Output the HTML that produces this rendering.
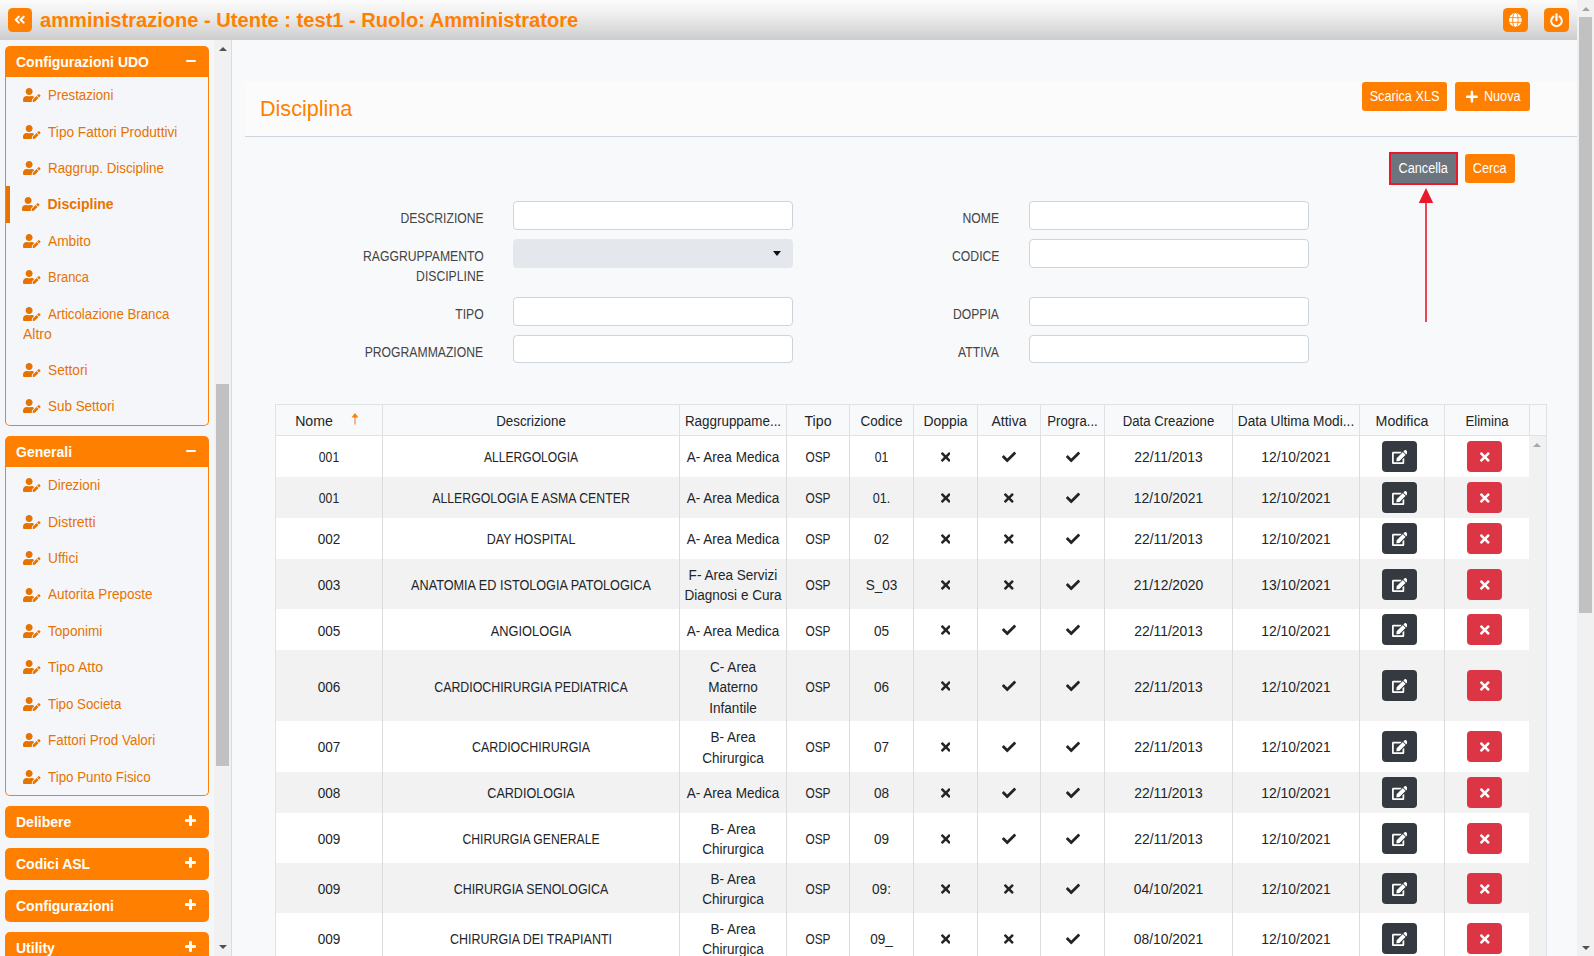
<!DOCTYPE html>
<html lang="it"><head><meta charset="utf-8"><title>Disciplina</title>
<style>
*{box-sizing:border-box;margin:0;padding:0}
html,body{width:1594px;height:956px;overflow:hidden;background:#f8f9fa}
body{position:relative;font-family:"Liberation Sans",sans-serif;font-size:14px;color:#212529}
svg{display:block}
/* header */
#hdr{position:absolute;left:0;top:0;width:1577px;height:40px;background:linear-gradient(#fcfcfc,#f1f1f1 30%,#e3e3e3 58%,#cdcdcd)}
.hb{position:absolute;top:8px;height:24px;background:#ff8000;border-radius:4.500px;display:block}
.hb svg{position:absolute;fill:#fff}
.hb:first-child svg{width:11.400px;height:13.400px;left:6.300px;top:5.400px}
.hb svg.gl{width:12.800px;height:14px;left:6.100px;top:5px}
.hb svg.pw{width:13px;height:15px;left:6.300px;top:4.600px}
#ttl{transform:scaleX(1.004);transform-origin:0 50%;position:absolute;left:40px;top:8px;font-size:20px;font-weight:bold;line-height:24px;color:#ff8000;white-space:nowrap}
/* page scrollbar */
#pscroll{position:absolute;left:1577px;top:0;width:17px;height:956px;background:#f1f1f1}
#pscroll b{position:absolute;left:2px;top:17px;width:13px;height:596px;background:#c1c1c1}
i.up,i.dn{position:absolute;left:50%;margin-left:-4px;width:0;height:0;border-left:4px solid transparent;border-right:4px solid transparent}
i.up{border-bottom:4px solid #a3a3a3;top:7px}
i.dn{border-top:4px solid #505050;bottom:6px}
/* sidebar */
#side{position:absolute;left:0;top:40px;width:214px;height:916px;overflow:hidden;background:#f5f6fa}
#side .ph,#side .pb{position:absolute;left:5px;width:204px;margin-top:-40px}
.ph{height:31px;background:#ff8000;border-radius:5px 5px 0 0;color:#fff;font-weight:bold;font-size:14px;line-height:31px;padding-left:11px;white-space:nowrap}
.ph.cl{height:32px;line-height:32px;border-radius:5px}
.ph em{position:absolute;right:13px;top:13.750px;width:10.500px;height:2.500px;background:#fff;border-radius:1.250px}
.ph.cl em{top:13.250px;right:12.900px;width:11.200px}
.pb{padding-top:1.350px}
.it.two{height:55.900px}
.ph em.pl:after{content:"";position:absolute;left:4.350px;top:-4.350px;width:2.500px;height:11.200px;background:#fff;border-radius:1.250px}
.pb{border:1px solid #ff8000;border-top:0;border-radius:0 0 5px 5px;background:#f5f6fa}
.it{position:relative;padding:7px 0 7px 17px;line-height:20.800px;height:36.420px;color:#e67300;font-size:14px;margin-bottom:0}
.it .ue{display:inline-block;width:17.500px;height:14px;fill:#e67300;vertical-align:-2px;margin-right:8px}
.it .t,.it .t2{display:inline-block;position:relative;top:-.100px;left:-0.500px;transform:scaleX(.95);transform-origin:0 50%}
.it.act{font-weight:bold}
.it.act .t{transform:none;left:-1px;top:-1px}
.it .t2{top:-.600px}
.it.act .ue{margin-left:-1px;margin-right:9px;position:relative;top:-1px}
.it.act:before{content:"";position:absolute;left:0;top:-1.610px;width:4px;height:37px;background:#e67300}
/* sidebar scrollbar */
#sscroll{position:absolute;left:214px;top:40px;width:17px;height:916px;background:#f1f1f1;border-right:0}
#sscroll b{position:absolute;left:2px;top:344px;width:13px;height:382px;background:#c1c1c1}
#sscroll i.dn{bottom:7px}
#sscroll i.up{border-bottom-color:#505050}
/* main */
#main{position:absolute;left:0;top:0;width:1577px;height:956px;pointer-events:none}
#main:before{content:"";position:absolute;left:231px;top:40px;width:1px;height:916px;background:#dcdcdc}
#tbar{position:absolute;left:245px;top:82px;width:1332px;height:55px;background:#fbfbfc;border-bottom:1px solid #cdd6de}
#tbar h1{position:absolute;left:15px;top:13px;transform:scaleX(.98);transform-origin:0 50%;font-size:22px;font-weight:normal;line-height:28px;color:#ff8000}
.btn{position:absolute;display:block;height:29px;border-radius:3px;color:#fff;font-size:14px;line-height:29px;text-align:center;white-space:nowrap}
.btn.or{background:#ff8000}
.btn.gr{background:#6c757d;border:2px solid #e8192c;border-radius:0}
.bx{display:inline-block;transform:scaleX(.905)}
#canc{left:1389px;top:152px;width:69px;height:33px;line-height:29px}
#cerca{left:1465px;top:154px;width:50px}
.plus{display:inline-block;width:11.800px;height:13.500px;vertical-align:-2px;margin-right:4px;margin-left:3px}
.plus svg{fill:#fff;width:11.800px;height:13.500px}
#arrow{position:absolute;left:1415.500px;top:188px}
.fl{position:absolute;font-size:14px;line-height:20px;color:#444;text-align:right;white-space:nowrap}
.fl span{display:inline-block;transform:scaleX(.87);transform-origin:100% 50%}
.inp{position:absolute;width:280px;height:29px;background:#fff;border:1px solid #ced4da;border-radius:4px}
.sel{position:absolute;width:280px;height:29px;background:#e4e7eb;border-radius:4px}
.sel i{position:absolute;right:12px;top:12px;border-left:4px solid transparent;border-right:4px solid transparent;border-top:5px solid #111}
/* grid */
#grid{position:absolute;left:275px;top:404px;width:1272px;height:560px}
table{border-collapse:collapse;table-layout:fixed}
#gh{position:absolute;left:0;top:0;width:1272px;height:32px;background:#f8f9fa}
#gh th{border:1px solid #dee2e6;font-weight:normal;height:31px;position:relative;text-align:center;color:#212529;white-space:nowrap;overflow:hidden}
#gh th div{position:relative;top:1px}
.sort{position:absolute;left:75px;top:8px;width:8px;height:12px}
#gb{position:absolute;left:0;top:32px;width:1254px;height:530px;overflow:hidden}
#gt{width:1254px;margin-left:0}
#gt td{text-align:center;vertical-align:middle;border-left:1px solid #dcdcdc;line-height:20.300px;padding:0;color:#212529}
#gt td:first-child{border-left:1px solid #dee2e6}
#gt td div{position:relative;top:1px}
#gt tr.dn1 td div{top:2px}
#gt tr.od{background:#fff}
#gt tr.ev{background:#f2f2f2}
.u{transform:scaleX(.896)}
.m{transform:scaleX(.967)}
.n{transform:scaleX(.87)}
.d{transform:scaleX(.99)}
.ic{display:inline-block;fill:#212529;position:relative;top:3px}
.ic.tm{width:9.600px;height:14px}
.ic.ck{width:14px;height:14px}
.bt{display:inline-block;width:35px;height:31px;border-radius:4px;vertical-align:middle;position:relative;left:-3px}
.bt.dk{background:#343a40}
.bt.rd{background:#dc3545}
.bt svg{position:absolute;fill:#fff}
.bt .ed{width:15.750px;height:14px;left:10px;top:9px}
.bt .tm{width:9.600px;height:14px;left:13.400px;top:9.300px;position:absolute}
#gscroll{position:absolute;left:1254px;top:32px;width:18px;height:530px;background:#f1f1f1;border-right:1px solid #dee2e6}
#gscroll i.up{top:7px;border-bottom-color:#a8a8a8;margin-left:-4.500px}
#gscroll i.dn{top:508px;bottom:auto;margin-left:-4.500px}

</style></head><body>
<div id="hdr">
  <span class="hb" style="left:8px;width:24px"><svg viewBox="0 0 448 512"><path d="M223.700 239l136-136c9.400-9.400 24.600-9.400 33.900 0l22.600 22.600c9.400 9.400 9.400 24.600 0 33.900L319.900 256l96.400 96.400c9.400 9.400 9.400 24.600 0 33.900L393.700 409c-9.400 9.400-24.600 9.400-33.900 0l-136-136c-9.500-9.400-9.500-24.600-.1-34zm-192 34l136 136c9.400 9.400 24.600 9.400 33.900 0l22.600-22.600c9.400-9.400 9.400-24.600 0-33.900L127.900 256l96.400-96.400c9.400-9.400 9.400-24.600 0-33.900L201.700 103c-9.400-9.400-24.600-9.400-33.900 0l-136 136c-9.500 9.400-9.500 24.600-.1 34z"/></svg></span>
  <div id="ttl">amministrazione - Utente : test1 - Ruolo: Amministratore</div>
  <span class="hb" style="left:1503px;width:25px"><svg viewBox="0 0 26 28" class="gl"><ellipse cx="13" cy="14" rx="13" ry="14" fill="#fff"/><g stroke="#ff8000" stroke-width="1.700" fill="none"><ellipse cx="13" cy="14" rx="5.600" ry="15.500"/><line x1="0" y1="9.300" x2="26" y2="9.300"/><line x1="0" y1="18.700" x2="26" y2="18.700"/></g></svg></span>
  <span class="hb" style="left:1544px;width:25px"><svg viewBox="0 0 26 30" class="pw"><g stroke="#fff" fill="none" stroke-linecap="round"><path d="M6.800 7.200A10.600 10.600 0 1 0 19.200 7.200" stroke-width="4"/><line x1="13" y1="2.400" x2="13" y2="14.500" stroke-width="4.200"/></g></svg></span>
</div>
<div id="pscroll"><i class="up"></i><b></b><i class="dn"></i></div>

<div id="side">
  <div class="ph" style="top:46px"><span style="position:relative;top:.600px">Configurazioni UDO</span><em class="mi"></em></div>
  <div class="pb" style="top:77px;height:349px">
    <div class="it"><svg class="ue" viewBox="0 0 640 512"><path d="M224 256c70.7 0 128-57.300 128-128S294.700 0 224 0 96 57.300 96 128s57.300 128 128 128zm89.600 32h-16.700c-22.200 10.200-46.900 16-72.900 16s-50.600-5.800-72.900-16h-16.700C60.200 288 0 348.200 0 422.400V464c0 26.500 21.500 48 48 48h274.900c-2.400-6.800-3.400-14-2.600-21.300l6.800-60.900 1.200-11.100 7.900-7.900 77.300-77.300c-24.500-27.700-60-45.500-99.900-45.500zm45.300 145.300l-6.800 61c-1.100 10.200 7.500 18.800 17.600 17.600l60.900-6.800 137.900-137.900-71.700-71.700-137.900 137.800zM633 268.900L595.100 231c-9.300-9.300-24.500-9.300-33.800 0l-37.800 37.800-4.100 4.100 71.800 71.700 41.800-41.800c9.300-9.400 9.300-24.500 0-33.900z"/></svg><span class="t" style="transform:scaleX(0.944)">Prestazioni</span></div><div class="it"><svg class="ue" viewBox="0 0 640 512"><path d="M224 256c70.7 0 128-57.300 128-128S294.700 0 224 0 96 57.300 96 128s57.300 128 128 128zm89.600 32h-16.700c-22.200 10.200-46.900 16-72.900 16s-50.600-5.800-72.900-16h-16.700C60.200 288 0 348.200 0 422.400V464c0 26.500 21.500 48 48 48h274.900c-2.400-6.800-3.400-14-2.600-21.300l6.800-60.900 1.200-11.100 7.900-7.900 77.300-77.300c-24.500-27.700-60-45.500-99.900-45.500zm45.300 145.300l-6.800 61c-1.100 10.200 7.500 18.800 17.600 17.600l60.900-6.800 137.900-137.900-71.700-71.700-137.900 137.800zM633 268.900L595.100 231c-9.300-9.300-24.500-9.300-33.800 0l-37.800 37.800-4.100 4.100 71.800 71.700 41.800-41.800c9.300-9.400 9.300-24.500 0-33.900z"/></svg><span class="t" style="transform:scaleX(0.976)">Tipo Fattori Produttivi</span></div><div class="it"><svg class="ue" viewBox="0 0 640 512"><path d="M224 256c70.7 0 128-57.300 128-128S294.700 0 224 0 96 57.300 96 128s57.300 128 128 128zm89.600 32h-16.700c-22.200 10.200-46.900 16-72.900 16s-50.600-5.800-72.900-16h-16.700C60.200 288 0 348.200 0 422.400V464c0 26.500 21.500 48 48 48h274.900c-2.400-6.800-3.400-14-2.600-21.300l6.800-60.900 1.200-11.100 7.900-7.900 77.300-77.300c-24.500-27.700-60-45.500-99.900-45.500zm45.300 145.300l-6.800 61c-1.100 10.200 7.500 18.800 17.600 17.600l60.900-6.800 137.900-137.900-71.700-71.700-137.900 137.800zM633 268.900L595.100 231c-9.300-9.300-24.500-9.300-33.800 0l-37.800 37.800-4.100 4.100 71.800 71.700 41.800-41.800c9.300-9.400 9.300-24.500 0-33.900z"/></svg><span class="t" style="transform:scaleX(0.954)">Raggrup. Discipline</span></div><div class="it act"><svg class="ue" viewBox="0 0 640 512"><path d="M224 256c70.7 0 128-57.300 128-128S294.700 0 224 0 96 57.300 96 128s57.300 128 128 128zm89.600 32h-16.700c-22.200 10.200-46.900 16-72.900 16s-50.600-5.800-72.900-16h-16.700C60.200 288 0 348.200 0 422.400V464c0 26.500 21.500 48 48 48h274.900c-2.400-6.800-3.400-14-2.600-21.300l6.800-60.900 1.200-11.100 7.900-7.900 77.300-77.300c-24.500-27.700-60-45.500-99.900-45.500zm45.300 145.300l-6.800 61c-1.100 10.200 7.500 18.800 17.600 17.600l60.900-6.800 137.900-137.900-71.700-71.700-137.900 137.800zM633 268.900L595.100 231c-9.300-9.300-24.500-9.300-33.800 0l-37.800 37.800-4.100 4.100 71.800 71.700 41.800-41.800c9.300-9.400 9.300-24.500 0-33.900z"/></svg><span class="t">Discipline</span></div><div class="it"><svg class="ue" viewBox="0 0 640 512"><path d="M224 256c70.7 0 128-57.300 128-128S294.700 0 224 0 96 57.300 96 128s57.300 128 128 128zm89.600 32h-16.700c-22.200 10.200-46.900 16-72.900 16s-50.600-5.800-72.900-16h-16.700C60.200 288 0 348.200 0 422.400V464c0 26.500 21.500 48 48 48h274.900c-2.400-6.800-3.400-14-2.600-21.300l6.800-60.900 1.200-11.100 7.900-7.900 77.300-77.300c-24.500-27.700-60-45.500-99.900-45.500zm45.300 145.300l-6.800 61c-1.100 10.200 7.500 18.800 17.600 17.600l60.900-6.800 137.900-137.900-71.700-71.700-137.900 137.800zM633 268.900L595.100 231c-9.300-9.300-24.500-9.300-33.800 0l-37.800 37.800-4.100 4.100 71.800 71.700 41.800-41.800c9.300-9.400 9.300-24.500 0-33.900z"/></svg><span class="t" style="transform:scaleX(0.982)">Ambito</span></div><div class="it"><svg class="ue" viewBox="0 0 640 512"><path d="M224 256c70.7 0 128-57.300 128-128S294.700 0 224 0 96 57.300 96 128s57.300 128 128 128zm89.600 32h-16.700c-22.200 10.200-46.900 16-72.900 16s-50.600-5.800-72.900-16h-16.700C60.200 288 0 348.200 0 422.400V464c0 26.500 21.500 48 48 48h274.900c-2.400-6.800-3.400-14-2.600-21.300l6.800-60.900 1.200-11.100 7.900-7.900 77.300-77.300c-24.500-27.700-60-45.500-99.900-45.500zm45.300 145.300l-6.800 61c-1.100 10.200 7.500 18.800 17.600 17.600l60.900-6.800 137.900-137.900-71.700-71.700-137.900 137.800zM633 268.900L595.100 231c-9.300-9.300-24.500-9.300-33.800 0l-37.800 37.800-4.100 4.100 71.800 71.700 41.800-41.800c9.300-9.400 9.300-24.500 0-33.900z"/></svg><span class="t" style="transform:scaleX(0.925)">Branca</span></div><div class="it two"><svg class="ue" viewBox="0 0 640 512"><path d="M224 256c70.7 0 128-57.300 128-128S294.700 0 224 0 96 57.300 96 128s57.300 128 128 128zm89.600 32h-16.700c-22.200 10.200-46.900 16-72.900 16s-50.600-5.800-72.900-16h-16.700C60.200 288 0 348.200 0 422.400V464c0 26.500 21.500 48 48 48h274.900c-2.400-6.800-3.400-14-2.600-21.300l6.800-60.900 1.200-11.100 7.900-7.900 77.300-77.300c-24.500-27.700-60-45.500-99.900-45.500zm45.300 145.300l-6.800 61c-1.100 10.200 7.500 18.800 17.600 17.600l60.900-6.800 137.900-137.900-71.700-71.700-137.900 137.800zM633 268.900L595.100 231c-9.300-9.300-24.500-9.300-33.800 0l-37.800 37.800-4.100 4.100 71.800 71.700 41.800-41.800c9.300-9.400 9.300-24.500 0-33.900z"/></svg><span class="t" style="transform:scaleX(0.946)">Articolazione Branca</span><br><span class="t2" style="transform:scaleX(1.001)">Altro</span></div><div class="it"><svg class="ue" viewBox="0 0 640 512"><path d="M224 256c70.7 0 128-57.300 128-128S294.700 0 224 0 96 57.300 96 128s57.300 128 128 128zm89.600 32h-16.700c-22.200 10.200-46.900 16-72.900 16s-50.600-5.800-72.900-16h-16.700C60.200 288 0 348.200 0 422.400V464c0 26.500 21.500 48 48 48h274.900c-2.400-6.800-3.400-14-2.600-21.300l6.800-60.900 1.200-11.100 7.900-7.900 77.300-77.300c-24.500-27.700-60-45.500-99.900-45.500zm45.300 145.300l-6.800 61c-1.100 10.200 7.500 18.800 17.600 17.600l60.900-6.800 137.900-137.900-71.700-71.700-137.900 137.800zM633 268.900L595.100 231c-9.300-9.300-24.500-9.300-33.800 0l-37.800 37.800-4.100 4.100 71.800 71.700 41.800-41.800c9.300-9.400 9.300-24.500 0-33.900z"/></svg><span class="t" style="transform:scaleX(0.978)">Settori</span></div><div class="it"><svg class="ue" viewBox="0 0 640 512"><path d="M224 256c70.7 0 128-57.300 128-128S294.700 0 224 0 96 57.300 96 128s57.300 128 128 128zm89.600 32h-16.700c-22.200 10.200-46.900 16-72.900 16s-50.600-5.800-72.900-16h-16.700C60.200 288 0 348.200 0 422.400V464c0 26.500 21.500 48 48 48h274.900c-2.400-6.800-3.400-14-2.600-21.300l6.800-60.900 1.200-11.100 7.900-7.900 77.300-77.300c-24.500-27.700-60-45.500-99.900-45.500zm45.300 145.300l-6.800 61c-1.100 10.200 7.500 18.800 17.600 17.600l60.900-6.800 137.900-137.900-71.700-71.700-137.900 137.800zM633 268.900L595.100 231c-9.300-9.300-24.500-9.300-33.800 0l-37.800 37.800-4.100 4.100 71.800 71.700 41.800-41.800c9.300-9.400 9.300-24.500 0-33.900z"/></svg><span class="t" style="transform:scaleX(0.96)">Sub Settori</span></div>
  </div>
  <div class="ph" style="top:436px"><span style="position:relative;top:1px">Generali</span><em class="mi"></em></div>
  <div class="pb" style="top:467px;height:329px">
    <div class="it"><svg class="ue" viewBox="0 0 640 512"><path d="M224 256c70.7 0 128-57.300 128-128S294.700 0 224 0 96 57.300 96 128s57.300 128 128 128zm89.600 32h-16.700c-22.200 10.200-46.900 16-72.900 16s-50.600-5.800-72.900-16h-16.700C60.200 288 0 348.200 0 422.400V464c0 26.500 21.500 48 48 48h274.900c-2.400-6.800-3.400-14-2.600-21.300l6.800-60.900 1.200-11.100 7.900-7.900 77.300-77.300c-24.500-27.700-60-45.500-99.900-45.500zm45.300 145.300l-6.800 61c-1.100 10.200 7.500 18.800 17.600 17.600l60.900-6.800 137.900-137.900-71.700-71.700-137.900 137.800zM633 268.900L595.100 231c-9.300-9.300-24.500-9.300-33.800 0l-37.800 37.800-4.100 4.100 71.800 71.700 41.800-41.800c9.300-9.400 9.300-24.500 0-33.900z"/></svg><span class="t" style="transform:scaleX(0.958)">Direzioni</span></div><div class="it"><svg class="ue" viewBox="0 0 640 512"><path d="M224 256c70.7 0 128-57.300 128-128S294.700 0 224 0 96 57.300 96 128s57.300 128 128 128zm89.600 32h-16.700c-22.200 10.200-46.900 16-72.900 16s-50.600-5.800-72.900-16h-16.700C60.200 288 0 348.200 0 422.400V464c0 26.500 21.500 48 48 48h274.900c-2.400-6.800-3.400-14-2.600-21.300l6.800-60.900 1.200-11.100 7.900-7.900 77.300-77.300c-24.500-27.700-60-45.500-99.900-45.500zm45.300 145.300l-6.800 61c-1.100 10.200 7.500 18.800 17.600 17.600l60.900-6.800 137.900-137.900-71.700-71.700-137.900 137.800zM633 268.900L595.100 231c-9.300-9.300-24.500-9.300-33.800 0l-37.800 37.800-4.100 4.100 71.800 71.700 41.800-41.800c9.300-9.400 9.300-24.500 0-33.900z"/></svg><span class="t" style="transform:scaleX(1.001)">Distretti</span></div><div class="it"><svg class="ue" viewBox="0 0 640 512"><path d="M224 256c70.7 0 128-57.300 128-128S294.700 0 224 0 96 57.300 96 128s57.300 128 128 128zm89.600 32h-16.700c-22.200 10.200-46.900 16-72.900 16s-50.600-5.800-72.900-16h-16.700C60.200 288 0 348.200 0 422.400V464c0 26.500 21.500 48 48 48h274.900c-2.400-6.800-3.400-14-2.600-21.300l6.800-60.900 1.200-11.100 7.900-7.900 77.300-77.300c-24.500-27.700-60-45.500-99.900-45.500zm45.300 145.300l-6.800 61c-1.100 10.200 7.500 18.800 17.600 17.600l60.900-6.800 137.900-137.900-71.700-71.700-137.900 137.800zM633 268.900L595.100 231c-9.300-9.300-24.500-9.300-33.800 0l-37.800 37.800-4.100 4.100 71.800 71.700 41.800-41.800c9.300-9.400 9.300-24.500 0-33.900z"/></svg><span class="t" style="transform:scaleX(0.985)">Uffici</span></div><div class="it"><svg class="ue" viewBox="0 0 640 512"><path d="M224 256c70.7 0 128-57.300 128-128S294.700 0 224 0 96 57.300 96 128s57.300 128 128 128zm89.600 32h-16.700c-22.200 10.200-46.900 16-72.900 16s-50.600-5.800-72.900-16h-16.700C60.200 288 0 348.200 0 422.400V464c0 26.500 21.500 48 48 48h274.900c-2.400-6.800-3.400-14-2.600-21.300l6.800-60.900 1.200-11.100 7.900-7.900 77.300-77.300c-24.500-27.700-60-45.500-99.900-45.500zm45.300 145.300l-6.800 61c-1.100 10.200 7.500 18.800 17.600 17.600l60.900-6.800 137.900-137.900-71.700-71.700-137.900 137.800zM633 268.900L595.100 231c-9.300-9.300-24.500-9.300-33.800 0l-37.800 37.800-4.100 4.100 71.800 71.700 41.800-41.800c9.300-9.400 9.300-24.500 0-33.900z"/></svg><span class="t" style="transform:scaleX(0.966)">Autorita Preposte</span></div><div class="it"><svg class="ue" viewBox="0 0 640 512"><path d="M224 256c70.7 0 128-57.300 128-128S294.700 0 224 0 96 57.300 96 128s57.300 128 128 128zm89.600 32h-16.700c-22.200 10.200-46.900 16-72.900 16s-50.600-5.800-72.900-16h-16.700C60.200 288 0 348.200 0 422.400V464c0 26.500 21.500 48 48 48h274.900c-2.400-6.800-3.400-14-2.600-21.300l6.800-60.900 1.200-11.100 7.900-7.900 77.300-77.300c-24.500-27.700-60-45.500-99.900-45.500zm45.300 145.300l-6.800 61c-1.100 10.200 7.500 18.800 17.600 17.600l60.900-6.800 137.900-137.900-71.700-71.700-137.900 137.800zM633 268.900L595.100 231c-9.300-9.300-24.500-9.300-33.800 0l-37.800 37.800-4.100 4.100 71.800 71.700 41.800-41.800c9.300-9.400 9.300-24.500 0-33.900z"/></svg><span class="t" style="transform:scaleX(0.97)">Toponimi</span></div><div class="it"><svg class="ue" viewBox="0 0 640 512"><path d="M224 256c70.7 0 128-57.300 128-128S294.700 0 224 0 96 57.300 96 128s57.300 128 128 128zm89.600 32h-16.700c-22.200 10.200-46.900 16-72.900 16s-50.600-5.800-72.900-16h-16.700C60.200 288 0 348.200 0 422.400V464c0 26.500 21.500 48 48 48h274.900c-2.400-6.800-3.400-14-2.600-21.300l6.800-60.900 1.200-11.100 7.900-7.900 77.300-77.300c-24.500-27.700-60-45.500-99.900-45.500zm45.300 145.300l-6.800 61c-1.100 10.200 7.500 18.800 17.600 17.600l60.900-6.800 137.900-137.900-71.700-71.700-137.900 137.800zM633 268.900L595.100 231c-9.300-9.300-24.500-9.300-33.800 0l-37.800 37.800-4.100 4.100 71.800 71.700 41.800-41.800c9.300-9.400 9.300-24.500 0-33.900z"/></svg><span class="t" style="transform:scaleX(1.005)">Tipo Atto</span></div><div class="it"><svg class="ue" viewBox="0 0 640 512"><path d="M224 256c70.7 0 128-57.300 128-128S294.700 0 224 0 96 57.300 96 128s57.300 128 128 128zm89.600 32h-16.700c-22.200 10.200-46.900 16-72.900 16s-50.600-5.800-72.900-16h-16.700C60.200 288 0 348.200 0 422.400V464c0 26.500 21.500 48 48 48h274.900c-2.400-6.800-3.400-14-2.600-21.300l6.800-60.900 1.200-11.100 7.900-7.900 77.300-77.300c-24.500-27.700-60-45.500-99.900-45.500zm45.300 145.300l-6.800 61c-1.100 10.200 7.500 18.800 17.600 17.600l60.900-6.800 137.900-137.900-71.700-71.700-137.900 137.800zM633 268.900L595.100 231c-9.300-9.300-24.500-9.300-33.800 0l-37.800 37.800-4.100 4.100 71.800 71.700 41.800-41.800c9.300-9.400 9.300-24.500 0-33.900z"/></svg><span class="t" style="transform:scaleX(0.95)">Tipo Societa</span></div><div class="it"><svg class="ue" viewBox="0 0 640 512"><path d="M224 256c70.7 0 128-57.300 128-128S294.700 0 224 0 96 57.300 96 128s57.300 128 128 128zm89.600 32h-16.700c-22.200 10.200-46.900 16-72.900 16s-50.600-5.800-72.900-16h-16.700C60.200 288 0 348.200 0 422.400V464c0 26.500 21.500 48 48 48h274.900c-2.400-6.800-3.400-14-2.600-21.300l6.800-60.900 1.200-11.100 7.900-7.900 77.300-77.300c-24.500-27.700-60-45.500-99.900-45.500zm45.300 145.300l-6.800 61c-1.100 10.200 7.500 18.800 17.600 17.600l60.900-6.800 137.900-137.900-71.700-71.700-137.900 137.800zM633 268.900L595.100 231c-9.300-9.300-24.500-9.300-33.800 0l-37.800 37.800-4.100 4.100 71.800 71.700 41.800-41.800c9.300-9.400 9.300-24.500 0-33.900z"/></svg><span class="t" style="transform:scaleX(0.96)">Fattori Prod Valori</span></div><div class="it"><svg class="ue" viewBox="0 0 640 512"><path d="M224 256c70.7 0 128-57.300 128-128S294.700 0 224 0 96 57.300 96 128s57.300 128 128 128zm89.600 32h-16.700c-22.200 10.200-46.900 16-72.900 16s-50.600-5.800-72.900-16h-16.700C60.200 288 0 348.200 0 422.400V464c0 26.500 21.500 48 48 48h274.900c-2.400-6.800-3.400-14-2.600-21.300l6.800-60.900 1.200-11.100 7.900-7.900 77.300-77.300c-24.500-27.700-60-45.500-99.900-45.500zm45.300 145.300l-6.800 61c-1.100 10.200 7.500 18.800 17.600 17.600l60.900-6.800 137.900-137.900-71.700-71.700-137.900 137.800zM633 268.900L595.100 231c-9.300-9.300-24.500-9.300-33.800 0l-37.800 37.800-4.100 4.100 71.800 71.700 41.800-41.800c9.300-9.400 9.300-24.500 0-33.900z"/></svg><span class="t" style="transform:scaleX(0.954)">Tipo Punto Fisico</span></div>
  </div>
  <div class="ph cl" style="top:806px"><span>Delibere</span><em class="pl"></em></div>
  <div class="ph cl" style="top:848px"><span>Codici ASL</span><em class="pl"></em></div>
  <div class="ph cl" style="top:890px"><span>Configurazioni</span><em class="pl"></em></div>
  <div class="ph cl" style="top:932px"><span>Utility</span><em class="pl"></em></div>
</div>
<div id="sscroll"><i class="up"></i><b></b><i class="dn"></i></div>

<div id="main">
  <div id="tbar">
    <h1>Disciplina</h1>
    <span class="btn or" style="left:1117px;top:0;width:85px"><span class="bx">Scarica XLS</span></span>
    <span class="btn or" style="left:1210px;top:0;width:75px"><span class="plus"><svg viewBox="0 0 448 512"><path d="M416 208H272V64c0-17.670-14.330-32-32-32h-32c-17.670 0-32 14.330-32 32v144H32c-17.670 0-32 14.330-32 32v32c0 17.670 14.330 32 32 32h144v144c0 17.670 14.330 32 32 32h32c17.670 0 32-14.330 32-32V304h144c17.670 0 32-14.330 32-32v-32c0-17.670-14.330-32-32-32z"/></svg></span><span class="bx">Nuova</span></span>
  </div>
  <span class="btn gr" id="canc"><span class="bx">Cancella</span></span>
  <span class="btn or" id="cerca"><span class="bx">Cerca</span></span>
  <svg id="arrow" width="20" height="140" viewBox="0 0 20 140"><line x1="10" y1="12" x2="10" y2="134" stroke="#e8192c" stroke-width="1.600"/><path d="M10 0L17.200 15H2.800z" fill="#e8192c"/></svg>

  <label class="fl" style="top:208px;right:1093.500px"><span>DESCRIZIONE</span></label>
  <label class="fl" style="top:246px;right:1093.500px"><span>RAGGRUPPAMENTO</span><br><span>DISCIPLINE</span></label>
  <label class="fl" style="top:304px;right:1093.500px"><span>TIPO</span></label>
  <label class="fl" style="top:342px;right:1093.500px"><span>PROGRAMMAZIONE</span></label>
  <label class="fl" style="top:208px;right:578px"><span>NOME</span></label>
  <label class="fl" style="top:246px;right:578px"><span>CODICE</span></label>
  <label class="fl" style="top:304px;right:578px"><span>DOPPIA</span></label>
  <label class="fl" style="top:342px;right:578px"><span>ATTIVA</span></label>
  <div class="inp" style="left:513px;top:201px"></div>
  <div class="sel" style="left:513px;top:239px"><i></i></div>
  <div class="inp" style="left:513px;top:297px"></div>
  <div class="inp" style="left:513px;top:335px;height:28px"></div>
  <div class="inp" style="left:1029px;top:201px"></div>
  <div class="inp" style="left:1029px;top:239px"></div>
  <div class="inp" style="left:1029px;top:297px"></div>
  <div class="inp" style="left:1029px;top:335px;height:28px"></div>

  <div id="grid">
    <table id="gh"><colgroup><col style="width:107px"><col style="width:297px"><col style="width:107px"><col style="width:63px"><col style="width:64px"><col style="width:64px"><col style="width:63px"><col style="width:64px"><col style="width:128px"><col style="width:127px"><col style="width:85px"><col style="width:85px"><col style="width:17px"></colgroup>
    <tr><th><div class="h" style="transform:scaleX(1.01);left:-15px">Nome</div><svg class="sort" viewBox="0 0 8 12"><path d="M4 0L7.500 4.500H0.500z" fill="#ff8000"/><path d="M4 4V11.500" stroke="#ff6a3a" stroke-width="1"/></svg></th><th><div class="h" style="transform:scaleX(0.952)">Descrizione</div></th><th><div class="h" style="transform:scaleX(0.958)">Raggruppame...</div></th><th><div class="h" style="transform:scaleX(1.011)">Tipo</div></th><th><div class="h" style="transform:scaleX(0.963)">Codice</div></th><th><div class="h" style="transform:scaleX(0.994)">Doppia</div></th><th><div class="h" style="transform:scaleX(1.0)">Attiva</div></th><th><div class="h" style="transform:scaleX(0.941)">Progra...</div></th><th><div class="h" style="transform:scaleX(0.94)">Data Creazione</div></th><th><div class="h" style="transform:scaleX(0.978)">Data Ultima Modi...</div></th><th><div class="h" style="transform:scaleX(1.013)">Modifica</div></th><th><div class="h" style="transform:scaleX(0.94)">Elimina</div></th><th></th></tr>
    </table>
    <div id="gb">
    <table id="gt"><colgroup><col style="width:107px"><col style="width:297px"><col style="width:107px"><col style="width:63px"><col style="width:64px"><col style="width:64px"><col style="width:63px"><col style="width:64px"><col style="width:128px"><col style="width:127px"><col style="width:85px"><col style="width:85px"></colgroup>
    <tr class="od" style="height:41px"><td><div class="n" style="transform:scaleX(0.87)">001</div></td><td><div class="u" style="transform:scaleX(0.864)">ALLERGOLOGIA</div></td><td><div class="m">A- Area Medica</div></td><td><div class="u" style="transform:scaleX(.85)">OSP</div></td><td><div class="n" style="transform:scaleX(0.87)">01</div></td><td><svg class="ic tm" viewBox="0 0 352 512"><path d="M242.720 256l100.070-100.070c12.280-12.280 12.280-32.190 0-44.480l-22.240-22.240c-12.280-12.280-32.190-12.280-44.480 0L176 189.280 75.930 89.210c-12.280-12.280-32.190-12.280-44.480 0L9.210 111.450c-12.280 12.280-12.280 32.190 0 44.480L109.280 256 9.210 356.070c-12.280 12.280-12.280 32.190 0 44.480l22.240 22.240c12.280 12.280 32.200 12.280 44.480 0L176 322.720l100.070 100.070c12.280 12.280 32.200 12.280 44.480 0l22.240-22.240c12.280-12.280 12.280-32.190 0-44.480L242.720 256z"/></svg></td><td><svg class="ic ck" viewBox="0 0 512 512"><path d="M173.898 439.404l-166.400-166.400c-9.997-9.997-9.997-26.206 0-36.204l36.203-36.204c9.997-9.998 26.207-9.998 36.204 0L192 312.690 432.095 72.596c9.997-9.997 26.207-9.997 36.204 0l36.203 36.204c9.997 9.997 9.997 26.206 0 36.204l-294.400 294.401c-9.998 9.997-26.207 9.997-36.204-.001z"/></svg></td><td><svg class="ic ck" viewBox="0 0 512 512"><path d="M173.898 439.404l-166.400-166.400c-9.997-9.997-9.997-26.206 0-36.204l36.203-36.204c9.997-9.998 26.207-9.998 36.204 0L192 312.690 432.095 72.596c9.997-9.997 26.207-9.997 36.204 0l36.203 36.204c9.997 9.997 9.997 26.206 0 36.204l-294.400 294.401c-9.998 9.997-26.207 9.997-36.204-.001z"/></svg></td><td><div class="d">22/11/2013</div></td><td><div class="d">12/10/2021</div></td><td><span class="bt dk"><svg class="ed" viewBox="0 0 576 512"><path d="M402.600 83.200l90.200 90.200c3.800 3.800 3.800 10 0 13.800L274.400 405.600l-92.800 10.300c-12.400 1.400-22.900-9.100-21.500-21.500l10.300-92.800L388.800 83.200c3.800-3.800 10-3.800 13.800 0zm162-22.900l-48.800-48.800c-15.200-15.200-39.900-15.200-55.200 0l-35.400 35.400c-3.800 3.800-3.800 10 0 13.800l90.200 90.200c3.800 3.800 10 3.800 13.800 0l35.400-35.400c15.200-15.300 15.200-40 0-55.200zM384 346.200V448H64V128h229.800c3.200 0 6.200-1.300 8.500-3.500l40-40c7.600-7.600 2.200-20.500-8.500-20.500H48C21.500 64 0 85.500 0 112v352c0 26.500 21.500 48 48 48h352c26.500 0 48-21.500 48-48V306.200c0-10.700-12.900-16-20.500-8.500l-40 40c-2.200 2.300-3.500 5.300-3.500 8.500z"/></svg></span></td><td><span class="bt rd"><svg class="ic tm" viewBox="0 0 352 512"><path d="M242.720 256l100.070-100.070c12.280-12.280 12.280-32.190 0-44.480l-22.240-22.240c-12.280-12.280-32.190-12.280-44.480 0L176 189.280 75.930 89.210c-12.280-12.280-32.190-12.280-44.480 0L9.210 111.450c-12.280 12.280-12.280 32.190 0 44.480L109.280 256 9.210 356.070c-12.280 12.280-12.280 32.190 0 44.480l22.240 22.240c12.280 12.280 32.200 12.280 44.480 0L176 322.720l100.070 100.070c12.280 12.280 32.200 12.280 44.480 0l22.240-22.240c12.280-12.280 12.280-32.190 0-44.480L242.720 256z"/></svg></span></td></tr><tr class="ev" style="height:41px"><td><div class="n" style="transform:scaleX(0.87)">001</div></td><td><div class="u" style="transform:scaleX(0.879)">ALLERGOLOGIA E ASMA CENTER</div></td><td><div class="m">A- Area Medica</div></td><td><div class="u" style="transform:scaleX(.85)">OSP</div></td><td><div class="n" style="transform:scaleX(0.9)">01.</div></td><td><svg class="ic tm" viewBox="0 0 352 512"><path d="M242.720 256l100.070-100.070c12.280-12.280 12.280-32.190 0-44.480l-22.240-22.240c-12.280-12.280-32.190-12.280-44.480 0L176 189.280 75.930 89.210c-12.280-12.280-32.190-12.280-44.480 0L9.210 111.450c-12.280 12.280-12.280 32.190 0 44.480L109.280 256 9.210 356.070c-12.280 12.280-12.280 32.190 0 44.480l22.240 22.240c12.280 12.280 32.200 12.280 44.480 0L176 322.720l100.070 100.070c12.280 12.280 32.200 12.280 44.480 0l22.240-22.240c12.280-12.280 12.280-32.190 0-44.480L242.720 256z"/></svg></td><td><svg class="ic tm" viewBox="0 0 352 512"><path d="M242.720 256l100.070-100.070c12.280-12.280 12.280-32.190 0-44.480l-22.240-22.240c-12.280-12.280-32.190-12.280-44.480 0L176 189.280 75.930 89.210c-12.280-12.280-32.190-12.280-44.480 0L9.210 111.450c-12.280 12.280-12.280 32.190 0 44.480L109.280 256 9.210 356.070c-12.280 12.280-12.280 32.190 0 44.480l22.240 22.240c12.280 12.280 32.200 12.280 44.480 0L176 322.720l100.070 100.070c12.280 12.280 32.200 12.280 44.480 0l22.240-22.240c12.280-12.280 12.280-32.190 0-44.480L242.720 256z"/></svg></td><td><svg class="ic ck" viewBox="0 0 512 512"><path d="M173.898 439.404l-166.400-166.400c-9.997-9.997-9.997-26.206 0-36.204l36.203-36.204c9.997-9.998 26.207-9.998 36.204 0L192 312.690 432.095 72.596c9.997-9.997 26.207-9.997 36.204 0l36.203 36.204c9.997 9.997 9.997 26.206 0 36.204l-294.400 294.401c-9.998 9.997-26.207 9.997-36.204-.001z"/></svg></td><td><div class="d">12/10/2021</div></td><td><div class="d">12/10/2021</div></td><td><span class="bt dk"><svg class="ed" viewBox="0 0 576 512"><path d="M402.600 83.200l90.200 90.200c3.800 3.800 3.800 10 0 13.800L274.400 405.600l-92.800 10.300c-12.400 1.400-22.900-9.100-21.500-21.500l10.300-92.800L388.800 83.200c3.800-3.800 10-3.800 13.800 0zm162-22.900l-48.800-48.800c-15.200-15.200-39.900-15.200-55.200 0l-35.400 35.400c-3.800 3.800-3.800 10 0 13.800l90.200 90.200c3.800 3.800 10 3.800 13.800 0l35.400-35.400c15.200-15.300 15.200-40 0-55.200zM384 346.200V448H64V128h229.800c3.200 0 6.200-1.300 8.500-3.500l40-40c7.600-7.600 2.200-20.500-8.500-20.500H48C21.500 64 0 85.500 0 112v352c0 26.500 21.500 48 48 48h352c26.500 0 48-21.500 48-48V306.200c0-10.700-12.900-16-20.500-8.500l-40 40c-2.200 2.300-3.500 5.300-3.500 8.500z"/></svg></span></td><td><span class="bt rd"><svg class="ic tm" viewBox="0 0 352 512"><path d="M242.720 256l100.070-100.070c12.280-12.280 12.280-32.190 0-44.480l-22.240-22.240c-12.280-12.280-32.190-12.280-44.480 0L176 189.280 75.930 89.210c-12.280-12.280-32.190-12.280-44.480 0L9.210 111.450c-12.280 12.280-12.280 32.190 0 44.480L109.280 256 9.210 356.070c-12.280 12.280-12.280 32.190 0 44.480l22.240 22.240c12.280 12.280 32.200 12.280 44.480 0L176 322.720l100.070 100.070c12.280 12.280 32.200 12.280 44.480 0l22.240-22.240c12.280-12.280 12.280-32.190 0-44.480L242.720 256z"/></svg></span></td></tr><tr class="od" style="height:41px"><td><div class="n" style="transform:scaleX(0.97)">002</div></td><td><div class="u" style="transform:scaleX(0.891)">DAY HOSPITAL</div></td><td><div class="m">A- Area Medica</div></td><td><div class="u" style="transform:scaleX(.85)">OSP</div></td><td><div class="n" style="transform:scaleX(0.97)">02</div></td><td><svg class="ic tm" viewBox="0 0 352 512"><path d="M242.720 256l100.070-100.070c12.280-12.280 12.280-32.190 0-44.480l-22.240-22.240c-12.280-12.280-32.190-12.280-44.480 0L176 189.280 75.930 89.210c-12.280-12.280-32.190-12.280-44.480 0L9.210 111.450c-12.280 12.280-12.280 32.190 0 44.480L109.280 256 9.210 356.070c-12.280 12.280-12.280 32.190 0 44.480l22.240 22.240c12.280 12.280 32.200 12.280 44.480 0L176 322.720l100.070 100.070c12.280 12.280 32.200 12.280 44.480 0l22.240-22.240c12.280-12.280 12.280-32.190 0-44.480L242.720 256z"/></svg></td><td><svg class="ic tm" viewBox="0 0 352 512"><path d="M242.720 256l100.070-100.070c12.280-12.280 12.280-32.190 0-44.480l-22.240-22.240c-12.280-12.280-32.190-12.280-44.480 0L176 189.280 75.930 89.210c-12.280-12.280-32.190-12.280-44.480 0L9.210 111.450c-12.280 12.280-12.280 32.190 0 44.480L109.280 256 9.210 356.070c-12.280 12.280-12.280 32.190 0 44.480l22.240 22.240c12.280 12.280 32.200 12.280 44.480 0L176 322.720l100.070 100.070c12.280 12.280 32.200 12.280 44.480 0l22.240-22.240c12.280-12.280 12.280-32.190 0-44.480L242.720 256z"/></svg></td><td><svg class="ic ck" viewBox="0 0 512 512"><path d="M173.898 439.404l-166.400-166.400c-9.997-9.997-9.997-26.206 0-36.204l36.203-36.204c9.997-9.998 26.207-9.998 36.204 0L192 312.690 432.095 72.596c9.997-9.997 26.207-9.997 36.204 0l36.203 36.204c9.997 9.997 9.997 26.206 0 36.204l-294.400 294.401c-9.998 9.997-26.207 9.997-36.204-.001z"/></svg></td><td><div class="d">22/11/2013</div></td><td><div class="d">12/10/2021</div></td><td><span class="bt dk"><svg class="ed" viewBox="0 0 576 512"><path d="M402.600 83.200l90.200 90.200c3.800 3.800 3.800 10 0 13.800L274.400 405.600l-92.800 10.300c-12.400 1.400-22.900-9.100-21.500-21.500l10.300-92.800L388.800 83.200c3.800-3.800 10-3.800 13.800 0zm162-22.900l-48.800-48.800c-15.200-15.200-39.900-15.200-55.200 0l-35.400 35.400c-3.800 3.800-3.800 10 0 13.800l90.200 90.200c3.800 3.800 10 3.800 13.800 0l35.400-35.400c15.200-15.300 15.200-40 0-55.200zM384 346.200V448H64V128h229.800c3.200 0 6.200-1.300 8.500-3.500l40-40c7.600-7.600 2.200-20.500-8.500-20.500H48C21.500 64 0 85.500 0 112v352c0 26.500 21.500 48 48 48h352c26.500 0 48-21.500 48-48V306.200c0-10.700-12.900-16-20.500-8.500l-40 40c-2.200 2.300-3.500 5.300-3.500 8.500z"/></svg></span></td><td><span class="bt rd"><svg class="ic tm" viewBox="0 0 352 512"><path d="M242.720 256l100.070-100.070c12.280-12.280 12.280-32.190 0-44.480l-22.240-22.240c-12.280-12.280-32.190-12.280-44.480 0L176 189.280 75.930 89.210c-12.280-12.280-32.190-12.280-44.480 0L9.210 111.450c-12.280 12.280-12.280 32.190 0 44.480L109.280 256 9.210 356.070c-12.280 12.280-12.280 32.190 0 44.480l22.240 22.240c12.280 12.280 32.200 12.280 44.480 0L176 322.720l100.070 100.070c12.280 12.280 32.200 12.280 44.480 0l22.240-22.240c12.280-12.280 12.280-32.190 0-44.480L242.720 256z"/></svg></span></td></tr><tr class="ev" style="height:50px"><td><div class="n" style="transform:scaleX(0.97)">003</div></td><td><div class="u" style="transform:scaleX(0.904)">ANATOMIA ED ISTOLOGIA PATOLOGICA</div></td><td><div class="m">F- Area Servizi<br>Diagnosi e Cura</div></td><td><div class="u" style="transform:scaleX(.85)">OSP</div></td><td><div class="n" style="transform:scaleX(0.97)">S_03</div></td><td><svg class="ic tm" viewBox="0 0 352 512"><path d="M242.720 256l100.070-100.070c12.280-12.280 12.280-32.190 0-44.480l-22.240-22.240c-12.280-12.280-32.190-12.280-44.480 0L176 189.280 75.930 89.210c-12.280-12.280-32.190-12.280-44.480 0L9.210 111.450c-12.280 12.280-12.280 32.190 0 44.480L109.280 256 9.210 356.070c-12.280 12.280-12.280 32.190 0 44.480l22.240 22.240c12.280 12.280 32.200 12.280 44.480 0L176 322.720l100.070 100.070c12.280 12.280 32.200 12.280 44.480 0l22.240-22.240c12.280-12.280 12.280-32.190 0-44.480L242.720 256z"/></svg></td><td><svg class="ic tm" viewBox="0 0 352 512"><path d="M242.720 256l100.070-100.070c12.280-12.280 12.280-32.190 0-44.480l-22.240-22.240c-12.280-12.280-32.190-12.280-44.480 0L176 189.280 75.930 89.210c-12.280-12.280-32.190-12.280-44.480 0L9.210 111.450c-12.280 12.280-12.280 32.190 0 44.480L109.280 256 9.210 356.070c-12.280 12.280-12.280 32.190 0 44.480l22.240 22.240c12.280 12.280 32.200 12.280 44.480 0L176 322.720l100.070 100.070c12.280 12.280 32.200 12.280 44.480 0l22.240-22.240c12.280-12.280 12.280-32.190 0-44.480L242.720 256z"/></svg></td><td><svg class="ic ck" viewBox="0 0 512 512"><path d="M173.898 439.404l-166.400-166.400c-9.997-9.997-9.997-26.206 0-36.204l36.203-36.204c9.997-9.998 26.207-9.998 36.204 0L192 312.690 432.095 72.596c9.997-9.997 26.207-9.997 36.204 0l36.203 36.204c9.997 9.997 9.997 26.206 0 36.204l-294.400 294.401c-9.998 9.997-26.207 9.997-36.204-.001z"/></svg></td><td><div class="d">21/12/2020</div></td><td><div class="d">13/10/2021</div></td><td><span class="bt dk"><svg class="ed" viewBox="0 0 576 512"><path d="M402.600 83.200l90.200 90.200c3.800 3.800 3.800 10 0 13.800L274.400 405.600l-92.800 10.300c-12.400 1.400-22.900-9.100-21.500-21.500l10.300-92.800L388.800 83.200c3.800-3.800 10-3.800 13.800 0zm162-22.900l-48.800-48.800c-15.200-15.200-39.900-15.200-55.200 0l-35.400 35.400c-3.800 3.800-3.800 10 0 13.800l90.200 90.200c3.800 3.800 10 3.800 13.800 0l35.400-35.400c15.200-15.300 15.200-40 0-55.200zM384 346.200V448H64V128h229.800c3.200 0 6.200-1.300 8.500-3.500l40-40c7.600-7.600 2.200-20.500-8.500-20.500H48C21.500 64 0 85.500 0 112v352c0 26.500 21.500 48 48 48h352c26.500 0 48-21.500 48-48V306.200c0-10.700-12.900-16-20.500-8.500l-40 40c-2.200 2.300-3.500 5.300-3.500 8.500z"/></svg></span></td><td><span class="bt rd"><svg class="ic tm" viewBox="0 0 352 512"><path d="M242.720 256l100.070-100.070c12.280-12.280 12.280-32.190 0-44.480l-22.240-22.240c-12.280-12.280-32.190-12.280-44.480 0L176 189.280 75.930 89.210c-12.280-12.280-32.190-12.280-44.480 0L9.210 111.450c-12.280 12.280-12.280 32.190 0 44.480L109.280 256 9.210 356.070c-12.280 12.280-12.280 32.190 0 44.480l22.240 22.240c12.280 12.280 32.200 12.280 44.480 0L176 322.720l100.070 100.070c12.280 12.280 32.200 12.280 44.480 0l22.240-22.240c12.280-12.280 12.280-32.190 0-44.480L242.720 256z"/></svg></span></td></tr><tr class="od dn1" style="height:41px"><td><div class="n" style="transform:scaleX(0.97)">005</div></td><td><div class="u" style="transform:scaleX(0.916)">ANGIOLOGIA</div></td><td><div class="m">A- Area Medica</div></td><td><div class="u" style="transform:scaleX(.85)">OSP</div></td><td><div class="n" style="transform:scaleX(0.97)">05</div></td><td><svg class="ic tm" viewBox="0 0 352 512"><path d="M242.720 256l100.070-100.070c12.280-12.280 12.280-32.190 0-44.480l-22.240-22.240c-12.280-12.280-32.190-12.280-44.480 0L176 189.280 75.930 89.210c-12.280-12.280-32.190-12.280-44.480 0L9.210 111.450c-12.280 12.280-12.280 32.190 0 44.480L109.280 256 9.210 356.070c-12.280 12.280-12.280 32.190 0 44.480l22.240 22.240c12.280 12.280 32.200 12.280 44.480 0L176 322.720l100.070 100.070c12.280 12.280 32.200 12.280 44.480 0l22.240-22.240c12.280-12.280 12.280-32.190 0-44.480L242.720 256z"/></svg></td><td><svg class="ic ck" viewBox="0 0 512 512"><path d="M173.898 439.404l-166.400-166.400c-9.997-9.997-9.997-26.206 0-36.204l36.203-36.204c9.997-9.998 26.207-9.998 36.204 0L192 312.690 432.095 72.596c9.997-9.997 26.207-9.997 36.204 0l36.203 36.204c9.997 9.997 9.997 26.206 0 36.204l-294.400 294.401c-9.998 9.997-26.207 9.997-36.204-.001z"/></svg></td><td><svg class="ic ck" viewBox="0 0 512 512"><path d="M173.898 439.404l-166.400-166.400c-9.997-9.997-9.997-26.206 0-36.204l36.203-36.204c9.997-9.998 26.207-9.998 36.204 0L192 312.690 432.095 72.596c9.997-9.997 26.207-9.997 36.204 0l36.203 36.204c9.997 9.997 9.997 26.206 0 36.204l-294.400 294.401c-9.998 9.997-26.207 9.997-36.204-.001z"/></svg></td><td><div class="d">22/11/2013</div></td><td><div class="d">12/10/2021</div></td><td><span class="bt dk"><svg class="ed" viewBox="0 0 576 512"><path d="M402.600 83.200l90.200 90.200c3.800 3.800 3.800 10 0 13.800L274.400 405.600l-92.800 10.300c-12.400 1.400-22.900-9.100-21.500-21.500l10.300-92.800L388.800 83.200c3.800-3.800 10-3.800 13.800 0zm162-22.900l-48.800-48.800c-15.200-15.200-39.900-15.200-55.200 0l-35.400 35.400c-3.800 3.800-3.800 10 0 13.800l90.200 90.200c3.800 3.800 10 3.800 13.800 0l35.400-35.400c15.200-15.300 15.200-40 0-55.200zM384 346.200V448H64V128h229.800c3.200 0 6.200-1.300 8.500-3.500l40-40c7.600-7.600 2.200-20.500-8.500-20.500H48C21.500 64 0 85.500 0 112v352c0 26.500 21.500 48 48 48h352c26.500 0 48-21.500 48-48V306.200c0-10.700-12.900-16-20.500-8.500l-40 40c-2.200 2.300-3.500 5.300-3.500 8.500z"/></svg></span></td><td><span class="bt rd"><svg class="ic tm" viewBox="0 0 352 512"><path d="M242.720 256l100.070-100.070c12.280-12.280 12.280-32.190 0-44.480l-22.240-22.240c-12.280-12.280-32.190-12.280-44.480 0L176 189.280 75.930 89.210c-12.280-12.280-32.190-12.280-44.480 0L9.210 111.450c-12.280 12.280-12.280 32.190 0 44.480L109.280 256 9.210 356.070c-12.280 12.280-12.280 32.190 0 44.480l22.240 22.240c12.280 12.280 32.200 12.280 44.480 0L176 322.720l100.070 100.070c12.280 12.280 32.200 12.280 44.480 0l22.240-22.240c12.280-12.280 12.280-32.190 0-44.480L242.720 256z"/></svg></span></td></tr><tr class="ev dn1" style="height:71px"><td><div class="n" style="transform:scaleX(0.97)">006</div></td><td><div class="u" style="transform:scaleX(0.883)">CARDIOCHIRURGIA PEDIATRICA</div></td><td><div class="m">C- Area<br>Materno<br>Infantile</div></td><td><div class="u" style="transform:scaleX(.85)">OSP</div></td><td><div class="n" style="transform:scaleX(0.97)">06</div></td><td><svg class="ic tm" viewBox="0 0 352 512"><path d="M242.720 256l100.070-100.070c12.280-12.280 12.280-32.190 0-44.480l-22.240-22.240c-12.280-12.280-32.190-12.280-44.480 0L176 189.280 75.930 89.210c-12.280-12.280-32.190-12.280-44.480 0L9.210 111.450c-12.280 12.280-12.280 32.190 0 44.480L109.280 256 9.210 356.070c-12.280 12.280-12.280 32.190 0 44.480l22.240 22.240c12.280 12.280 32.200 12.280 44.480 0L176 322.720l100.070 100.070c12.280 12.280 32.200 12.280 44.480 0l22.240-22.240c12.280-12.280 12.280-32.190 0-44.480L242.720 256z"/></svg></td><td><svg class="ic ck" viewBox="0 0 512 512"><path d="M173.898 439.404l-166.400-166.400c-9.997-9.997-9.997-26.206 0-36.204l36.203-36.204c9.997-9.998 26.207-9.998 36.204 0L192 312.690 432.095 72.596c9.997-9.997 26.207-9.997 36.204 0l36.203 36.204c9.997 9.997 9.997 26.206 0 36.204l-294.400 294.401c-9.998 9.997-26.207 9.997-36.204-.001z"/></svg></td><td><svg class="ic ck" viewBox="0 0 512 512"><path d="M173.898 439.404l-166.400-166.400c-9.997-9.997-9.997-26.206 0-36.204l36.203-36.204c9.997-9.998 26.207-9.998 36.204 0L192 312.690 432.095 72.596c9.997-9.997 26.207-9.997 36.204 0l36.203 36.204c9.997 9.997 9.997 26.206 0 36.204l-294.400 294.401c-9.998 9.997-26.207 9.997-36.204-.001z"/></svg></td><td><div class="d">22/11/2013</div></td><td><div class="d">12/10/2021</div></td><td><span class="bt dk"><svg class="ed" viewBox="0 0 576 512"><path d="M402.600 83.200l90.200 90.200c3.800 3.800 3.800 10 0 13.800L274.400 405.600l-92.800 10.300c-12.400 1.400-22.900-9.100-21.500-21.500l10.300-92.800L388.800 83.200c3.800-3.800 10-3.800 13.800 0zm162-22.900l-48.800-48.800c-15.200-15.200-39.900-15.200-55.200 0l-35.400 35.400c-3.800 3.800-3.800 10 0 13.800l90.200 90.200c3.800 3.800 10 3.800 13.800 0l35.400-35.400c15.200-15.300 15.200-40 0-55.200zM384 346.200V448H64V128h229.800c3.200 0 6.200-1.300 8.500-3.500l40-40c7.600-7.600 2.200-20.500-8.500-20.500H48C21.500 64 0 85.500 0 112v352c0 26.500 21.500 48 48 48h352c26.500 0 48-21.500 48-48V306.200c0-10.700-12.900-16-20.500-8.500l-40 40c-2.200 2.300-3.500 5.300-3.500 8.500z"/></svg></span></td><td><span class="bt rd"><svg class="ic tm" viewBox="0 0 352 512"><path d="M242.720 256l100.070-100.070c12.280-12.280 12.280-32.190 0-44.480l-22.240-22.240c-12.280-12.280-32.190-12.280-44.480 0L176 189.280 75.930 89.210c-12.280-12.280-32.190-12.280-44.480 0L9.210 111.450c-12.280 12.280-12.280 32.190 0 44.480L109.280 256 9.210 356.070c-12.280 12.280-12.280 32.190 0 44.480l22.240 22.240c12.280 12.280 32.200 12.280 44.480 0L176 322.720l100.070 100.070c12.280 12.280 32.200 12.280 44.480 0l22.240-22.240c12.280-12.280 12.280-32.190 0-44.480L242.720 256z"/></svg></span></td></tr><tr class="od" style="height:51px"><td><div class="n" style="transform:scaleX(0.97)">007</div></td><td><div class="u" style="transform:scaleX(0.888)">CARDIOCHIRURGIA</div></td><td><div class="m">B- Area<br>Chirurgica</div></td><td><div class="u" style="transform:scaleX(.85)">OSP</div></td><td><div class="n" style="transform:scaleX(0.97)">07</div></td><td><svg class="ic tm" viewBox="0 0 352 512"><path d="M242.720 256l100.070-100.070c12.280-12.280 12.280-32.190 0-44.480l-22.240-22.240c-12.280-12.280-32.190-12.280-44.480 0L176 189.280 75.930 89.210c-12.280-12.280-32.190-12.280-44.480 0L9.210 111.450c-12.280 12.280-12.280 32.190 0 44.480L109.280 256 9.210 356.070c-12.280 12.280-12.280 32.190 0 44.480l22.240 22.240c12.280 12.280 32.200 12.280 44.480 0L176 322.720l100.070 100.070c12.280 12.280 32.200 12.280 44.480 0l22.240-22.240c12.280-12.280 12.280-32.190 0-44.480L242.720 256z"/></svg></td><td><svg class="ic ck" viewBox="0 0 512 512"><path d="M173.898 439.404l-166.400-166.400c-9.997-9.997-9.997-26.206 0-36.204l36.203-36.204c9.997-9.998 26.207-9.998 36.204 0L192 312.690 432.095 72.596c9.997-9.997 26.207-9.997 36.204 0l36.203 36.204c9.997 9.997 9.997 26.206 0 36.204l-294.400 294.401c-9.998 9.997-26.207 9.997-36.204-.001z"/></svg></td><td><svg class="ic ck" viewBox="0 0 512 512"><path d="M173.898 439.404l-166.400-166.400c-9.997-9.997-9.997-26.206 0-36.204l36.203-36.204c9.997-9.998 26.207-9.998 36.204 0L192 312.690 432.095 72.596c9.997-9.997 26.207-9.997 36.204 0l36.203 36.204c9.997 9.997 9.997 26.206 0 36.204l-294.400 294.401c-9.998 9.997-26.207 9.997-36.204-.001z"/></svg></td><td><div class="d">22/11/2013</div></td><td><div class="d">12/10/2021</div></td><td><span class="bt dk"><svg class="ed" viewBox="0 0 576 512"><path d="M402.600 83.200l90.200 90.200c3.800 3.800 3.800 10 0 13.800L274.400 405.600l-92.800 10.300c-12.400 1.400-22.900-9.100-21.500-21.500l10.300-92.800L388.800 83.200c3.800-3.800 10-3.800 13.800 0zm162-22.900l-48.800-48.800c-15.200-15.200-39.900-15.200-55.200 0l-35.400 35.400c-3.800 3.800-3.800 10 0 13.800l90.200 90.200c3.800 3.800 10 3.800 13.800 0l35.400-35.400c15.200-15.300 15.200-40 0-55.200zM384 346.200V448H64V128h229.800c3.200 0 6.200-1.300 8.500-3.500l40-40c7.600-7.600 2.200-20.500-8.500-20.500H48C21.500 64 0 85.500 0 112v352c0 26.500 21.500 48 48 48h352c26.500 0 48-21.500 48-48V306.200c0-10.700-12.900-16-20.500-8.500l-40 40c-2.200 2.300-3.500 5.300-3.500 8.500z"/></svg></span></td><td><span class="bt rd"><svg class="ic tm" viewBox="0 0 352 512"><path d="M242.720 256l100.070-100.070c12.280-12.280 12.280-32.190 0-44.480l-22.240-22.240c-12.280-12.280-32.190-12.280-44.480 0L176 189.280 75.930 89.210c-12.280-12.280-32.190-12.280-44.480 0L9.210 111.450c-12.280 12.280-12.280 32.190 0 44.480L109.280 256 9.210 356.070c-12.280 12.280-12.280 32.190 0 44.480l22.240 22.240c12.280 12.280 32.200 12.280 44.480 0L176 322.720l100.070 100.070c12.280 12.280 32.200 12.280 44.480 0l22.240-22.240c12.280-12.280 12.280-32.190 0-44.480L242.720 256z"/></svg></span></td></tr><tr class="ev" style="height:41px"><td><div class="n" style="transform:scaleX(0.97)">008</div></td><td><div class="u" style="transform:scaleX(0.899)">CARDIOLOGIA</div></td><td><div class="m">A- Area Medica</div></td><td><div class="u" style="transform:scaleX(.85)">OSP</div></td><td><div class="n" style="transform:scaleX(0.97)">08</div></td><td><svg class="ic tm" viewBox="0 0 352 512"><path d="M242.720 256l100.070-100.070c12.280-12.280 12.280-32.190 0-44.480l-22.240-22.240c-12.280-12.280-32.190-12.280-44.480 0L176 189.280 75.930 89.210c-12.280-12.280-32.190-12.280-44.480 0L9.210 111.450c-12.280 12.280-12.280 32.190 0 44.480L109.280 256 9.210 356.070c-12.280 12.280-12.280 32.190 0 44.480l22.240 22.240c12.280 12.280 32.200 12.280 44.480 0L176 322.720l100.070 100.070c12.280 12.280 32.200 12.280 44.480 0l22.240-22.240c12.280-12.280 12.280-32.190 0-44.480L242.720 256z"/></svg></td><td><svg class="ic ck" viewBox="0 0 512 512"><path d="M173.898 439.404l-166.400-166.400c-9.997-9.997-9.997-26.206 0-36.204l36.203-36.204c9.997-9.998 26.207-9.998 36.204 0L192 312.690 432.095 72.596c9.997-9.997 26.207-9.997 36.204 0l36.203 36.204c9.997 9.997 9.997 26.206 0 36.204l-294.400 294.401c-9.998 9.997-26.207 9.997-36.204-.001z"/></svg></td><td><svg class="ic ck" viewBox="0 0 512 512"><path d="M173.898 439.404l-166.400-166.400c-9.997-9.997-9.997-26.206 0-36.204l36.203-36.204c9.997-9.998 26.207-9.998 36.204 0L192 312.690 432.095 72.596c9.997-9.997 26.207-9.997 36.204 0l36.203 36.204c9.997 9.997 9.997 26.206 0 36.204l-294.400 294.401c-9.998 9.997-26.207 9.997-36.204-.001z"/></svg></td><td><div class="d">22/11/2013</div></td><td><div class="d">12/10/2021</div></td><td><span class="bt dk"><svg class="ed" viewBox="0 0 576 512"><path d="M402.600 83.200l90.200 90.200c3.800 3.800 3.800 10 0 13.800L274.400 405.600l-92.800 10.300c-12.400 1.400-22.900-9.100-21.500-21.500l10.300-92.800L388.800 83.200c3.800-3.800 10-3.800 13.800 0zm162-22.900l-48.800-48.800c-15.200-15.200-39.900-15.200-55.200 0l-35.400 35.400c-3.800 3.800-3.800 10 0 13.800l90.200 90.200c3.800 3.800 10 3.800 13.800 0l35.400-35.400c15.200-15.300 15.200-40 0-55.200zM384 346.200V448H64V128h229.800c3.200 0 6.200-1.300 8.500-3.500l40-40c7.600-7.600 2.200-20.500-8.500-20.500H48C21.500 64 0 85.500 0 112v352c0 26.500 21.500 48 48 48h352c26.500 0 48-21.500 48-48V306.200c0-10.700-12.900-16-20.500-8.500l-40 40c-2.200 2.300-3.500 5.300-3.500 8.500z"/></svg></span></td><td><span class="bt rd"><svg class="ic tm" viewBox="0 0 352 512"><path d="M242.720 256l100.070-100.070c12.280-12.280 12.280-32.190 0-44.480l-22.240-22.240c-12.280-12.280-32.190-12.280-44.480 0L176 189.280 75.930 89.210c-12.280-12.280-32.190-12.280-44.480 0L9.210 111.450c-12.280 12.280-12.280 32.190 0 44.480L109.280 256 9.210 356.070c-12.280 12.280-12.280 32.190 0 44.480l22.240 22.240c12.280 12.280 32.200 12.280 44.480 0L176 322.720l100.070 100.070c12.280 12.280 32.200 12.280 44.480 0l22.240-22.240c12.280-12.280 12.280-32.190 0-44.480L242.720 256z"/></svg></span></td></tr><tr class="od" style="height:50px"><td><div class="n" style="transform:scaleX(0.97)">009</div></td><td><div class="u" style="transform:scaleX(0.868)">CHIRURGIA GENERALE</div></td><td><div class="m">B- Area<br>Chirurgica</div></td><td><div class="u" style="transform:scaleX(.85)">OSP</div></td><td><div class="n" style="transform:scaleX(0.97)">09</div></td><td><svg class="ic tm" viewBox="0 0 352 512"><path d="M242.720 256l100.070-100.070c12.280-12.280 12.280-32.190 0-44.480l-22.240-22.240c-12.280-12.280-32.190-12.280-44.480 0L176 189.280 75.930 89.210c-12.280-12.280-32.190-12.280-44.480 0L9.210 111.450c-12.280 12.280-12.280 32.190 0 44.480L109.280 256 9.210 356.070c-12.280 12.280-12.280 32.190 0 44.480l22.240 22.240c12.280 12.280 32.200 12.280 44.480 0L176 322.720l100.070 100.070c12.280 12.280 32.200 12.280 44.480 0l22.240-22.240c12.280-12.280 12.280-32.190 0-44.480L242.720 256z"/></svg></td><td><svg class="ic ck" viewBox="0 0 512 512"><path d="M173.898 439.404l-166.400-166.400c-9.997-9.997-9.997-26.206 0-36.204l36.203-36.204c9.997-9.998 26.207-9.998 36.204 0L192 312.690 432.095 72.596c9.997-9.997 26.207-9.997 36.204 0l36.203 36.204c9.997 9.997 9.997 26.206 0 36.204l-294.400 294.401c-9.998 9.997-26.207 9.997-36.204-.001z"/></svg></td><td><svg class="ic ck" viewBox="0 0 512 512"><path d="M173.898 439.404l-166.400-166.400c-9.997-9.997-9.997-26.206 0-36.204l36.203-36.204c9.997-9.998 26.207-9.998 36.204 0L192 312.690 432.095 72.596c9.997-9.997 26.207-9.997 36.204 0l36.203 36.204c9.997 9.997 9.997 26.206 0 36.204l-294.400 294.401c-9.998 9.997-26.207 9.997-36.204-.001z"/></svg></td><td><div class="d">22/11/2013</div></td><td><div class="d">12/10/2021</div></td><td><span class="bt dk"><svg class="ed" viewBox="0 0 576 512"><path d="M402.600 83.200l90.200 90.200c3.800 3.800 3.800 10 0 13.800L274.400 405.600l-92.800 10.300c-12.400 1.400-22.900-9.100-21.500-21.500l10.300-92.800L388.800 83.200c3.800-3.800 10-3.800 13.800 0zm162-22.900l-48.800-48.800c-15.200-15.200-39.900-15.200-55.200 0l-35.400 35.400c-3.800 3.800-3.800 10 0 13.800l90.200 90.200c3.800 3.800 10 3.800 13.800 0l35.400-35.400c15.200-15.300 15.200-40 0-55.200zM384 346.200V448H64V128h229.800c3.200 0 6.200-1.300 8.500-3.500l40-40c7.600-7.600 2.200-20.500-8.500-20.500H48C21.500 64 0 85.500 0 112v352c0 26.500 21.500 48 48 48h352c26.500 0 48-21.500 48-48V306.200c0-10.700-12.900-16-20.500-8.500l-40 40c-2.200 2.300-3.500 5.300-3.500 8.500z"/></svg></span></td><td><span class="bt rd"><svg class="ic tm" viewBox="0 0 352 512"><path d="M242.720 256l100.070-100.070c12.280-12.280 12.280-32.190 0-44.480l-22.240-22.240c-12.280-12.280-32.190-12.280-44.480 0L176 189.280 75.930 89.210c-12.280-12.280-32.190-12.280-44.480 0L9.210 111.450c-12.280 12.280-12.280 32.190 0 44.480L109.280 256 9.210 356.070c-12.280 12.280-12.280 32.190 0 44.480l22.240 22.240c12.280 12.280 32.200 12.280 44.480 0L176 322.720l100.070 100.070c12.280 12.280 32.200 12.280 44.480 0l22.240-22.240c12.280-12.280 12.280-32.190 0-44.480L242.720 256z"/></svg></span></td></tr><tr class="ev" style="height:50px"><td><div class="n" style="transform:scaleX(0.97)">009</div></td><td><div class="u" style="transform:scaleX(0.887)">CHIRURGIA SENOLOGICA</div></td><td><div class="m">B- Area<br>Chirurgica</div></td><td><div class="u" style="transform:scaleX(.85)">OSP</div></td><td><div class="n" style="transform:scaleX(0.97)">09:</div></td><td><svg class="ic tm" viewBox="0 0 352 512"><path d="M242.720 256l100.070-100.070c12.280-12.280 12.280-32.190 0-44.480l-22.240-22.240c-12.280-12.280-32.190-12.280-44.480 0L176 189.280 75.930 89.210c-12.280-12.280-32.190-12.280-44.480 0L9.210 111.450c-12.280 12.280-12.280 32.190 0 44.480L109.280 256 9.210 356.070c-12.280 12.280-12.280 32.190 0 44.480l22.240 22.240c12.280 12.280 32.200 12.280 44.480 0L176 322.720l100.070 100.070c12.280 12.280 32.200 12.280 44.480 0l22.240-22.240c12.280-12.280 12.280-32.190 0-44.480L242.720 256z"/></svg></td><td><svg class="ic tm" viewBox="0 0 352 512"><path d="M242.720 256l100.070-100.070c12.280-12.280 12.280-32.190 0-44.480l-22.240-22.240c-12.280-12.280-32.190-12.280-44.480 0L176 189.280 75.930 89.210c-12.280-12.280-32.190-12.280-44.480 0L9.210 111.450c-12.280 12.280-12.280 32.190 0 44.480L109.280 256 9.210 356.070c-12.280 12.280-12.280 32.190 0 44.480l22.240 22.240c12.280 12.280 32.200 12.280 44.480 0L176 322.720l100.070 100.070c12.280 12.280 32.200 12.280 44.480 0l22.240-22.240c12.280-12.280 12.280-32.190 0-44.480L242.720 256z"/></svg></td><td><svg class="ic ck" viewBox="0 0 512 512"><path d="M173.898 439.404l-166.400-166.400c-9.997-9.997-9.997-26.206 0-36.204l36.203-36.204c9.997-9.998 26.207-9.998 36.204 0L192 312.690 432.095 72.596c9.997-9.997 26.207-9.997 36.204 0l36.203 36.204c9.997 9.997 9.997 26.206 0 36.204l-294.400 294.401c-9.998 9.997-26.207 9.997-36.204-.001z"/></svg></td><td><div class="d">04/10/2021</div></td><td><div class="d">12/10/2021</div></td><td><span class="bt dk"><svg class="ed" viewBox="0 0 576 512"><path d="M402.600 83.200l90.200 90.200c3.800 3.800 3.800 10 0 13.800L274.400 405.600l-92.800 10.300c-12.400 1.400-22.900-9.100-21.500-21.500l10.300-92.800L388.800 83.200c3.800-3.800 10-3.800 13.800 0zm162-22.900l-48.800-48.800c-15.200-15.200-39.900-15.200-55.200 0l-35.400 35.400c-3.800 3.800-3.800 10 0 13.800l90.200 90.200c3.800 3.800 10 3.800 13.800 0l35.400-35.400c15.200-15.300 15.200-40 0-55.200zM384 346.200V448H64V128h229.800c3.200 0 6.200-1.300 8.500-3.500l40-40c7.600-7.600 2.200-20.500-8.500-20.500H48C21.500 64 0 85.500 0 112v352c0 26.500 21.500 48 48 48h352c26.500 0 48-21.500 48-48V306.200c0-10.700-12.900-16-20.500-8.500l-40 40c-2.200 2.300-3.500 5.300-3.500 8.500z"/></svg></span></td><td><span class="bt rd"><svg class="ic tm" viewBox="0 0 352 512"><path d="M242.720 256l100.070-100.070c12.280-12.280 12.280-32.190 0-44.480l-22.240-22.240c-12.280-12.280-32.190-12.280-44.480 0L176 189.280 75.930 89.210c-12.280-12.280-32.190-12.280-44.480 0L9.210 111.450c-12.280 12.280-12.280 32.190 0 44.480L109.280 256 9.210 356.070c-12.280 12.280-12.280 32.190 0 44.480l22.240 22.240c12.280 12.280 32.200 12.280 44.480 0L176 322.720l100.070 100.070c12.280 12.280 32.200 12.280 44.480 0l22.240-22.240c12.280-12.280 12.280-32.190 0-44.480L242.720 256z"/></svg></span></td></tr><tr class="od" style="height:50px"><td><div class="n" style="transform:scaleX(0.97)">009</div></td><td><div class="u" style="transform:scaleX(0.891)">CHIRURGIA DEI TRAPIANTI</div></td><td><div class="m">B- Area<br>Chirurgica</div></td><td><div class="u" style="transform:scaleX(.85)">OSP</div></td><td><div class="n" style="transform:scaleX(0.97)">09_</div></td><td><svg class="ic tm" viewBox="0 0 352 512"><path d="M242.720 256l100.070-100.070c12.280-12.280 12.280-32.190 0-44.480l-22.240-22.240c-12.280-12.280-32.190-12.280-44.480 0L176 189.280 75.930 89.210c-12.280-12.280-32.190-12.280-44.480 0L9.210 111.450c-12.280 12.280-12.280 32.190 0 44.480L109.280 256 9.210 356.070c-12.280 12.280-12.280 32.190 0 44.480l22.240 22.240c12.280 12.280 32.200 12.280 44.480 0L176 322.720l100.070 100.070c12.280 12.280 32.200 12.280 44.480 0l22.240-22.240c12.280-12.280 12.280-32.190 0-44.480L242.720 256z"/></svg></td><td><svg class="ic tm" viewBox="0 0 352 512"><path d="M242.720 256l100.070-100.070c12.280-12.280 12.280-32.190 0-44.480l-22.240-22.240c-12.280-12.280-32.190-12.280-44.480 0L176 189.280 75.930 89.210c-12.280-12.280-32.190-12.280-44.480 0L9.210 111.450c-12.280 12.280-12.280 32.190 0 44.480L109.280 256 9.210 356.070c-12.280 12.280-12.280 32.190 0 44.480l22.240 22.240c12.280 12.280 32.200 12.280 44.480 0L176 322.720l100.070 100.070c12.280 12.280 32.200 12.280 44.480 0l22.240-22.240c12.280-12.280 12.280-32.190 0-44.480L242.720 256z"/></svg></td><td><svg class="ic ck" viewBox="0 0 512 512"><path d="M173.898 439.404l-166.400-166.400c-9.997-9.997-9.997-26.206 0-36.204l36.203-36.204c9.997-9.998 26.207-9.998 36.204 0L192 312.690 432.095 72.596c9.997-9.997 26.207-9.997 36.204 0l36.203 36.204c9.997 9.997 9.997 26.206 0 36.204l-294.400 294.401c-9.998 9.997-26.207 9.997-36.204-.001z"/></svg></td><td><div class="d">08/10/2021</div></td><td><div class="d">12/10/2021</div></td><td><span class="bt dk"><svg class="ed" viewBox="0 0 576 512"><path d="M402.600 83.200l90.200 90.200c3.800 3.800 3.800 10 0 13.800L274.400 405.600l-92.800 10.300c-12.400 1.400-22.900-9.100-21.500-21.500l10.300-92.800L388.800 83.200c3.800-3.800 10-3.800 13.800 0zm162-22.900l-48.800-48.800c-15.200-15.200-39.900-15.200-55.200 0l-35.400 35.400c-3.800 3.800-3.800 10 0 13.800l90.200 90.200c3.800 3.800 10 3.800 13.800 0l35.400-35.400c15.200-15.300 15.200-40 0-55.200zM384 346.200V448H64V128h229.800c3.200 0 6.200-1.300 8.500-3.500l40-40c7.600-7.600 2.200-20.500-8.500-20.500H48C21.500 64 0 85.500 0 112v352c0 26.500 21.500 48 48 48h352c26.500 0 48-21.500 48-48V306.200c0-10.700-12.900-16-20.500-8.500l-40 40c-2.200 2.300-3.500 5.300-3.500 8.500z"/></svg></span></td><td><span class="bt rd"><svg class="ic tm" viewBox="0 0 352 512"><path d="M242.720 256l100.070-100.070c12.280-12.280 12.280-32.190 0-44.480l-22.240-22.240c-12.280-12.280-32.190-12.280-44.480 0L176 189.280 75.930 89.210c-12.280-12.280-32.190-12.280-44.480 0L9.210 111.450c-12.280 12.280-12.280 32.190 0 44.480L109.280 256 9.210 356.070c-12.280 12.280-12.280 32.190 0 44.480l22.240 22.240c12.280 12.280 32.200 12.280 44.480 0L176 322.720l100.070 100.070c12.280 12.280 32.200 12.280 44.480 0l22.240-22.240c12.280-12.280 12.280-32.190 0-44.480L242.720 256z"/></svg></span></td></tr>
    </table>
    </div>
    <div id="gscroll"><i class="up"></i></div>
  </div>
</div>
</body></html>
